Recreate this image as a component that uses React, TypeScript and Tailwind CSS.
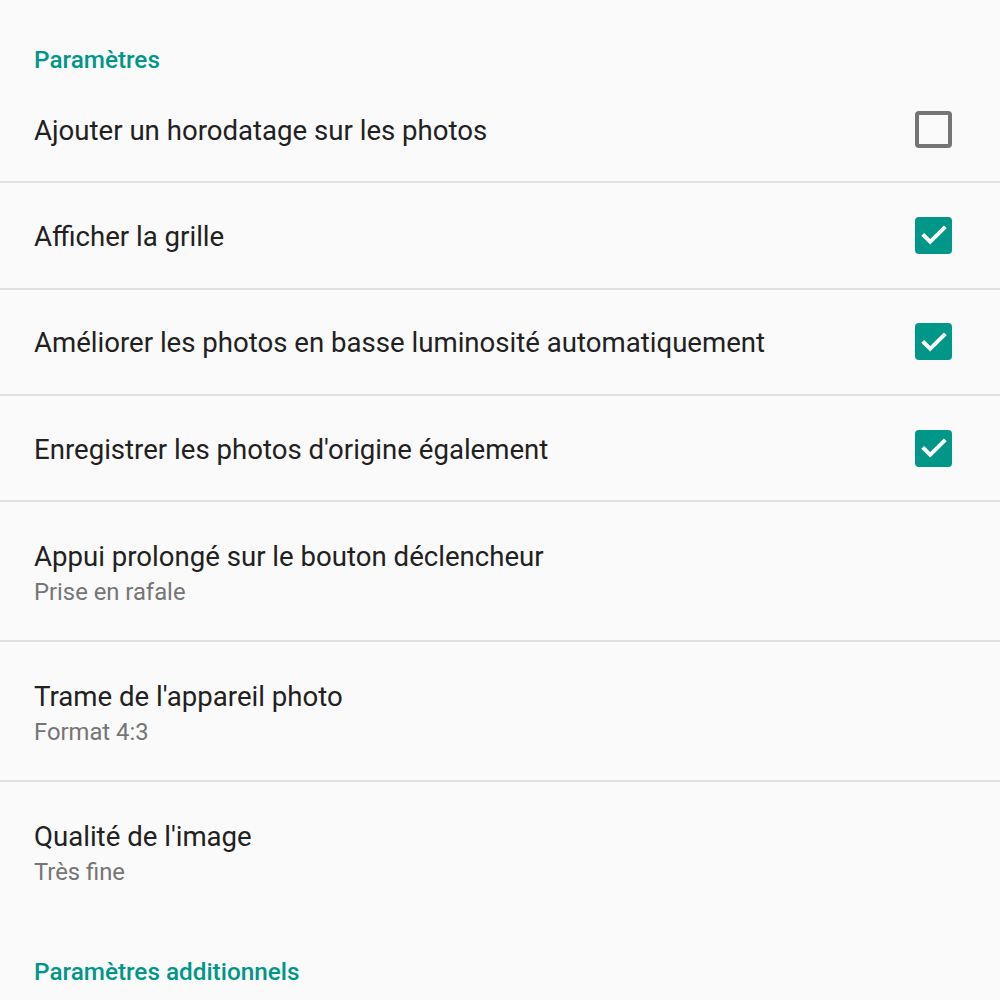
import React from "react";

type Item = { title: string; sub?: string; checked?: boolean };

const ITEMS: Item[] = [
  { title: "Ajouter un horodatage sur les photos", checked: false },
  { title: "Afficher la grille", checked: true },
  { title: "Améliorer les photos en basse luminosité automatiquement", checked: true },
  { title: "Enregistrer les photos d'origine également", checked: true },
  { title: "Appui prolongé sur le bouton déclencheur", sub: "Prise en rafale" },
  { title: "Trame de l'appareil photo", sub: "Format 4:3" },
  { title: "Qualité de l'image", sub: "Très fine" },
];

function Checkbox({ checked }: { checked: boolean }) {
  if (!checked) {
    return <div className="h-[37px] w-[37px] rounded-[4px] border-[4px] border-[#757575]" />;
  }
  return (
    <div className="grid h-[37px] w-[37px] place-items-center rounded-[4px] bg-[#009688]">
      <svg viewBox="0 0 24 24" className="h-[34px] w-[34px]" fill="none" stroke="#fff" strokeWidth={2.8} strokeLinecap="square">
        <path d="M5 12.5l4.3 4.3L19 7.2" />
      </svg>
    </div>
  );
}

export default function App() {
  return (
    <div className="min-h-screen bg-[#fafafa] font-['Roboto',sans-serif]">
      <div className="flex h-[77px] items-start px-[34px] pt-[45px]">
        <h2 className="text-[24.3px] font-medium leading-[30px] text-[#009688]">Paramètres</h2>
      </div>
      {ITEMS.map((it, i) => (
        <div key={it.title}>
          {it.sub ? (
            <div className="flex h-[138px] flex-col px-[34px] pt-[38px]">
              <div className="text-[27.6px] leading-[34px] text-[#212121]">{it.title}</div>
              <div className="mt-[3px] text-[23.8px] leading-[30px] text-[#757575]">{it.sub}</div>
            </div>
          ) : (
            <div className="flex h-[104.3px] items-center justify-between pl-[34px] pr-[48px]">
              <div className="pt-[3px] text-[27.6px] leading-[34px] text-[#212121]">{it.title}</div>
              <Checkbox checked={!!it.checked} />
            </div>
          )}
          {i < ITEMS.length - 1 && <div className="h-[2px] bg-[#e0e0e0]" />}
        </div>
      ))}
      <div className="flex h-[72px] items-end px-[34px] pb-[5px]">
        <h2 className="text-[24.3px] font-medium leading-[30px] text-[#009688]">Paramètres additionnels</h2>
      </div>
    </div>
  );
}
